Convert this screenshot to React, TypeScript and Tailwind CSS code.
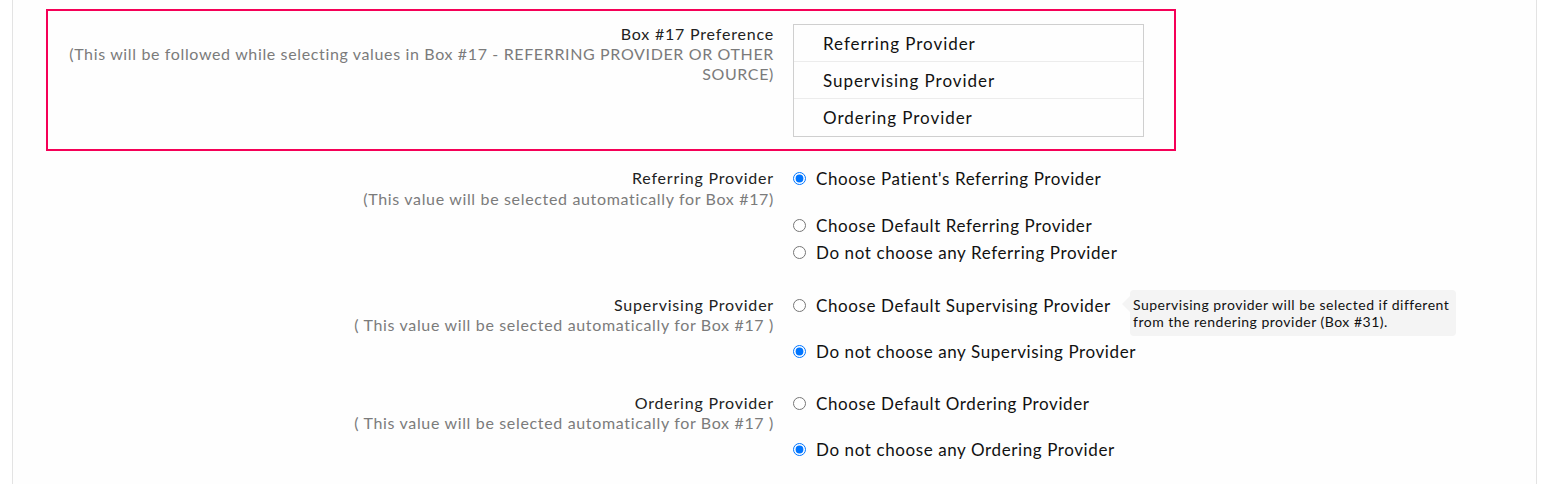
import React from "react";

const font = { fontFamily: "Lato, 'Noto Sans', sans-serif" };

function Radio({ checked, label, name, className = "", children }: { checked?: boolean; label: string; name: string; className?: string; children?: React.ReactNode }) {
  return (
    <label className={"relative flex h-[27px] items-center text-[17px] tracking-[0.6px] text-[#111] " + className}>
      <input type="radio" name={name} defaultChecked={checked} className="m-0 mr-[10px] h-[13px] w-[13px]" />
      <span>{label}</span>
      {children}
    </label>
  );
}

function Label({ title, sub, subClass = "" }: { title: string; sub: string; subClass?: string }) {
  return (
    <div className="w-[728px] shrink-0 pt-[3px] text-right leading-[20px]">
      <div className="text-[16px] tracking-[0.8px] text-[#222]">{title}</div>
      <div className={"text-[16px] tracking-[0.66px] text-[#7b7b7b] " + subClass}>{sub}</div>
    </div>
  );
}

export default function App() {
  return (
    <div className="min-h-[484px] w-full bg-white" style={font}>
      <div className="ml-[12px] min-h-[484px] w-[1525px] border-x border-[#e3e3e3] bg-[#fefefe] pl-[33px] pt-[9px]">
        <div className="flex w-[1130px] border-2 border-[#f50057] pb-[12px] pt-[13px]">
          <div className="w-[726px] shrink-0 text-right leading-[20px]">
            <div className="text-[16px] tracking-[0.8px] text-[#222]">Box #17 Preference</div>
            <div className="pl-[20px] text-[16px] tracking-[0.64px] text-[#7b7b7b]">
              (This will be followed while selecting values in Box #17 - REFERRING PROVIDER OR OTHER SOURCE)
            </div>
          </div>
          <div className="ml-[19px] w-[351px] border border-[#cfcfcf]">
            {["Referring Provider", "Supervising Provider", "Ordering Provider"].map((t, i) => (
              <div
                key={t}
                className={"flex h-[37px] items-center pl-[29px] pt-[1px] text-[17px] tracking-[0.95px] text-[#111] " + (i < 2 ? "border-b border-[#ececec]" : "")}
              >
                {t}
              </div>
            ))}
          </div>
        </div>

        <div className="mt-[14px] flex">
          <Label title="Referring Provider" sub="(This value will be selected automatically for Box #17)" subClass="mt-[1px]" />
          <div className="ml-[19px] flex flex-col">
            <Radio name="ref" checked label="Choose Patient's Referring Provider" className="mb-[20px]" />
            <Radio name="ref" label="Choose Default Referring Provider" />
            <Radio name="ref" label="Do not choose any Referring Provider" />
          </div>
        </div>

        <div className="mt-[26px] flex">
          <Label title="Supervising Provider" sub="( This value will be selected automatically for Box #17 )" />
          <div className="ml-[19px] flex flex-col">
            <Radio name="sup" label="Choose Default Supervising Provider" className="mb-[19px]">
              <div className="absolute left-[337px] top-[-2px] w-[326px] rounded-[4px] bg-[#f4f4f4] pb-[6px] pl-[3px] pr-[4px] pt-[6px] text-[14px] leading-[17px] tracking-[0.5px] text-[#111]">
                <span className="absolute left-[-8px] top-[6px] h-0 w-0 border-y-[8px] border-r-[8px] border-y-transparent border-r-[#f4f4f4]" />
                Supervising provider will be selected if different from the rendering provider (Box #31).
              </div>
            </Radio>
            <Radio name="sup" checked label="Do not choose any Supervising Provider" />
          </div>
        </div>

        <div className="mt-[25px] flex">
          <Label title="Ordering Provider" sub="( This value will be selected automatically for Box #17 )" />
          <div className="ml-[19px] flex flex-col">
            <Radio name="ord" label="Choose Default Ordering Provider" className="mb-[19px]" />
            <Radio name="ord" checked label="Do not choose any Ordering Provider" />
          </div>
        </div>
      </div>
    </div>
  );
}
